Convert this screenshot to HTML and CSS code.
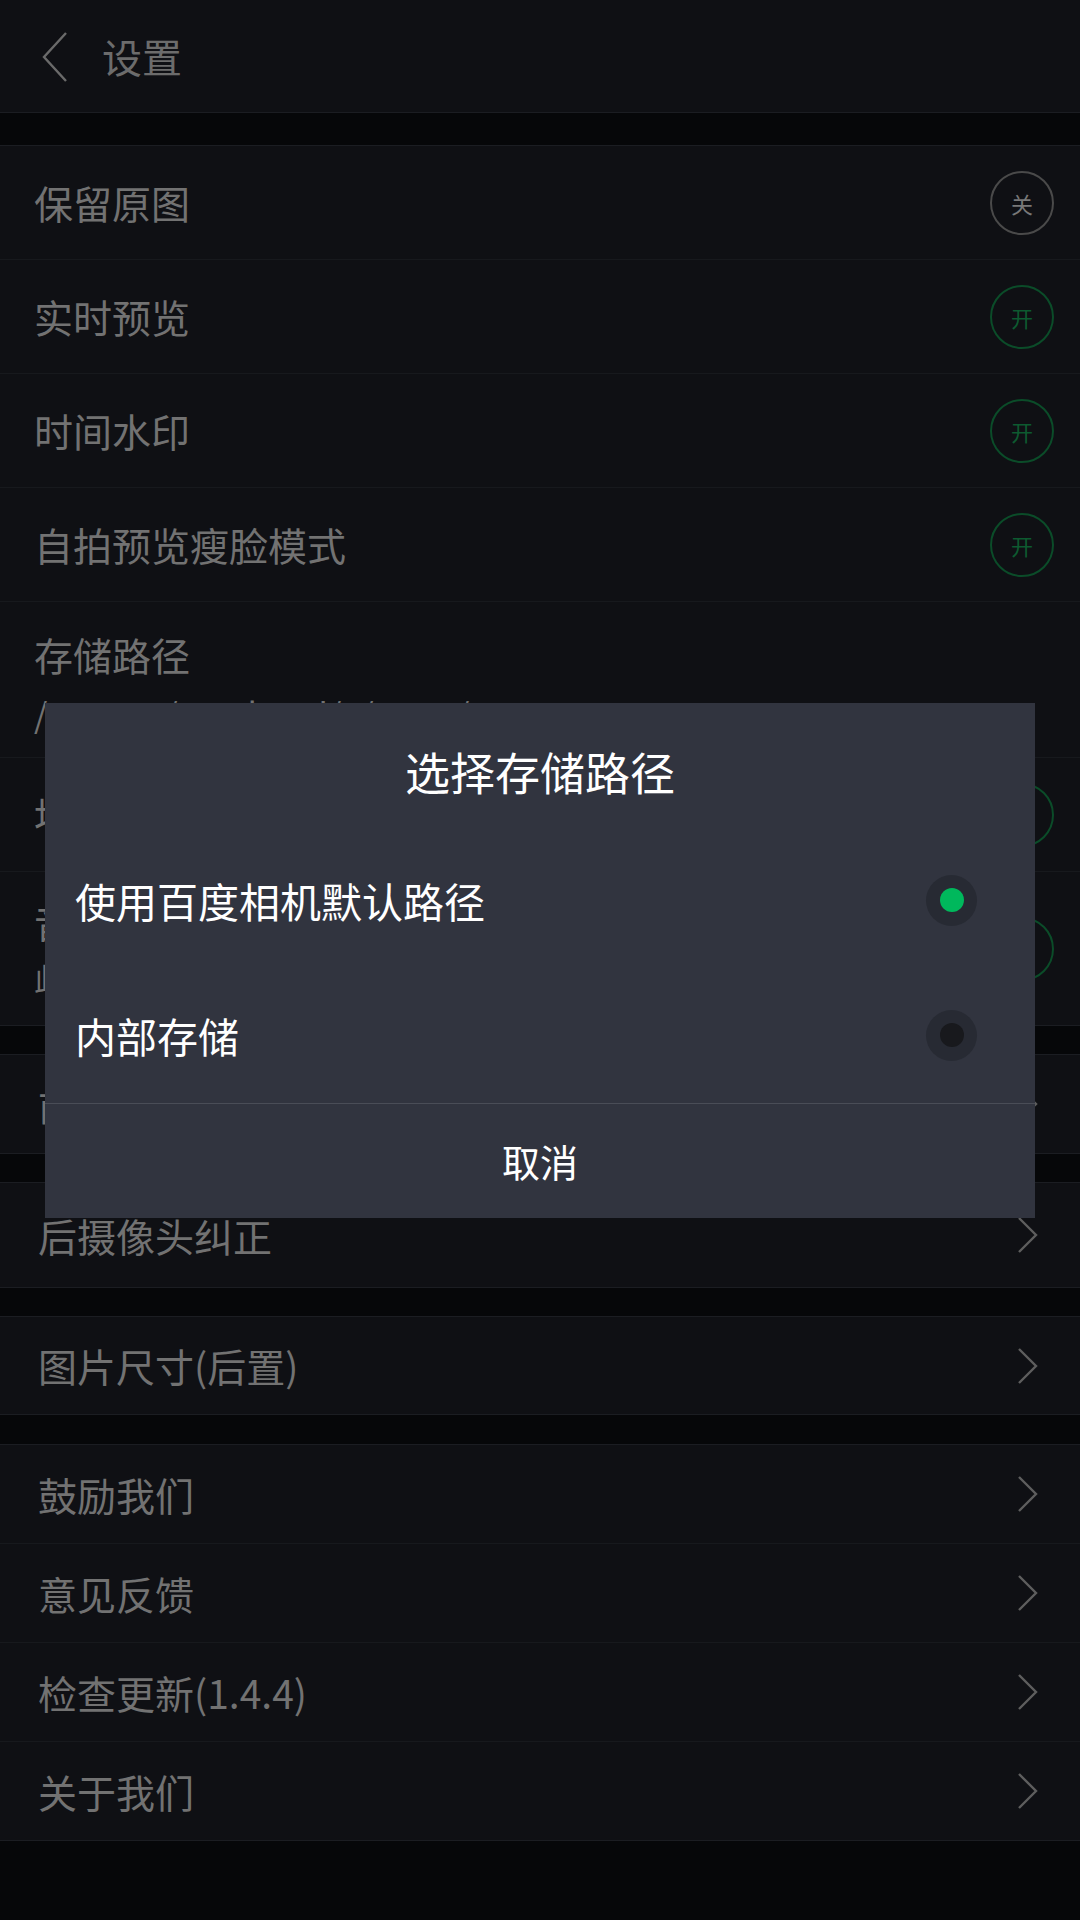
FILE: index.html
```html
<!DOCTYPE html>
<html lang="zh-CN">
<head>
<meta charset="UTF-8">
<title>设置</title>

<link rel="stylesheet" href="styles.css">
</head>

<body>

<header>
    <svg class="back" width="26" height="50" viewBox="0 0 26 50">
        <path d="M24 1 L2 25 L24 49" fill="none" stroke="#6a6a6a" stroke-width="2.4"/>
    </svg>
    <span class="title">设置</span>
</header>

<div class="gap first"></div>

<div class="group">
    <div class="row">
        <span>保留原图</span>
        <span class="toggle off">关</span>
    </div>
    <div class="row">
        <span>实时预览</span>
        <span class="toggle on">开</span>
    </div>
    <div class="row">
        <span>时间水印</span>
        <span class="toggle on">开</span>
    </div>
    <div class="row">
        <span>自拍预览瘦脸模式</span>
        <span class="toggle on">开</span>
    </div>
    <div class="row path">
        <div class="label">存储路径</div>
        <div class="sub">/storage/emulated/0/DCIM/Camera</div>
    </div>
    <div class="row">
        <span>地理位置水印</span>
        <span class="toggle on">开</span>
    </div>
    <div class="row double">
        <div>
            <div class="label">音量键拍照</div>
            <div class="desc">此功能开启后可用音量键拍照</div>
        </div>
        <span class="toggle on">开</span>
    </div>
</div>

<div class="gap"></div>

<div class="group">
    <div class="row link h98">
        <span>前摄像头纠正</span>
        <svg class="arrow" width="20" height="36" viewBox="0 0 20 36"><path d="M1 1 L18 18 L1 35" fill="none" stroke="#5e5e5e" stroke-width="2.4"/></svg>
    </div>
</div>

<div class="gap"></div>

<div class="group">
    <div class="row link h104">
        <span>后摄像头纠正</span>
        <svg class="arrow" width="20" height="36" viewBox="0 0 20 36"><path d="M1 1 L18 18 L1 35" fill="none" stroke="#5e5e5e" stroke-width="2.4"/></svg>
    </div>
</div>

<div class="gap"></div>

<div class="group">
    <div class="row link h97">
        <span>图片尺寸(后置)</span>
        <svg class="arrow" width="20" height="36" viewBox="0 0 20 36"><path d="M1 1 L18 18 L1 35" fill="none" stroke="#5e5e5e" stroke-width="2.4"/></svg>
    </div>
</div>

<div class="gap last"></div>

<div class="group">
    <div class="row link">
        <span>鼓励我们</span>
        <svg class="arrow" width="20" height="36" viewBox="0 0 20 36"><path d="M1 1 L18 18 L1 35" fill="none" stroke="#5e5e5e" stroke-width="2.4"/></svg>
    </div>
    <div class="row link">
        <span>意见反馈</span>
        <svg class="arrow" width="20" height="36" viewBox="0 0 20 36"><path d="M1 1 L18 18 L1 35" fill="none" stroke="#5e5e5e" stroke-width="2.4"/></svg>
    </div>
    <div class="row link">
        <span>检查更新(1.4.4)</span>
        <svg class="arrow" width="20" height="36" viewBox="0 0 20 36"><path d="M1 1 L18 18 L1 35" fill="none" stroke="#5e5e5e" stroke-width="2.4"/></svg>
    </div>
    <div class="row link">
        <span>关于我们</span>
        <svg class="arrow" width="20" height="36" viewBox="0 0 20 36"><path d="M1 1 L18 18 L1 35" fill="none" stroke="#5e5e5e" stroke-width="2.4"/></svg>
    </div>
</div>

<div class="mask">
    <div class="dialog">
        <div class="dialogTitle">选择存储路径</div>
        <div class="option">
            <span>使用百度相机默认路径</span>
            <span class="radio checked"><i></i></span>
        </div>
        <div class="option">
            <span>内部存储</span>
            <span class="radio"><i></i></span>
        </div>
        <div class="cancel">取消</div>
    </div>
</div>

</body>
</html>
```

FILE: styles.css
```css
*{
    box-sizing:border-box;
}

body{
    font-family:"Noto Sans CJK SC", sans-serif;
    margin:0;
    width:1080px;
    min-height:1920px;
    background:#060709;
    color:#727272;
}

header{
    height:113px;
    background:#0f1014;
    border-bottom:1px solid #1b1d22;
    display:flex;
    align-items:center;
    padding-left:42px;
}

.back{
    margin-top:1px;
}

.title{
    font-size:40px;
    line-height:1;
    margin-left:34px;
    color:#6c6c6c;
}

.gap{
    height:28px;
}

.gap.first{
    height:32px;
}

.gap.last{
    height:29px;
}

.group{
    background:#0f1014;
    border-top:1px solid #1b1d22;
    border-bottom:1px solid #1b1d22;
}

.row{
    height:114px;
    display:flex;
    align-items:center;
    justify-content:space-between;
    padding:0 26px 0 34px;
    border-bottom:1px solid #17191d;
    font-size:39px;
    line-height:1;
}

.row:last-child{
    border-bottom:none;
    height:113px;
}

.row.path{
    height:156px;
    display:block;
    padding-top:22px;
}

.row.path .label{
    line-height:60px;
}

.row.path .sub{
    font-size:34px;
    line-height:60px;
}

.row.double{
    height:153px;
}

.row.double .label{
    line-height:56px;
}

.row.double .desc{
    font-size:30px;
    line-height:56px;
}

.row.link{
    height:99px;
    padding:0 42px 0 38px;
}

.row.link:last-child{
    height:98px;
}

.row.link.h98{
    height:98px;
}

.row.link.h104{
    height:104px;
}

.row.link.h97{
    height:97px;
}

.toggle{
    width:64px;
    height:64px;
    border-radius:50%;
    border:2px solid #444;
    display:flex;
    align-items:center;
    justify-content:center;
    font-size:22px;
}

.toggle.off{
    border-color:#4a4a4a;
    color:#787878;
}

.toggle.on{
    border-color:#0b4c29;
    color:#0d5a30;
}

.mask{
    position:fixed;
    top:0;
    left:0;
    width:1080px;
    height:1920px;
    display:flex;
    justify-content:center;
    align-items:center;
}

.dialog{
    width:990px;
    height:515px;
    background:#31343f;
    color:white;
}

.dialogTitle{
    height:130px;
    padding-top:48px;
    font-size:45px;
    line-height:42px;
    text-align:center;
}

.option{
    height:135px;
    display:flex;
    align-items:center;
    justify-content:space-between;
    padding:0 58px 0 30px;
    font-size:41px;
    line-height:1;
}

.radio{
    width:51px;
    height:51px;
    border-radius:50%;
    background:#272a33;
    display:flex;
    align-items:center;
    justify-content:center;
}

.radio i{
    width:24px;
    height:24px;
    border-radius:50%;
    background:#18191d;
}

.radio.checked i{
    background:#00b85c;
}

.cancel{
    height:115px;
    border-top:1px solid #4a4d57;
    display:flex;
    align-items:center;
    justify-content:center;
    font-size:38px;
}
```
